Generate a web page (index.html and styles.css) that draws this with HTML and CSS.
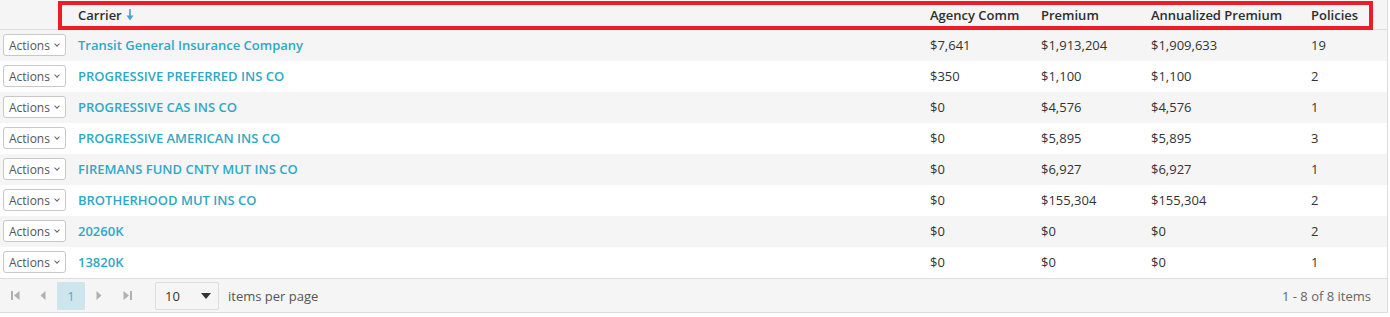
FILE: index.html
```html
<!DOCTYPE html>
<html>
<head>
<meta charset="utf-8">
<link rel="stylesheet" href="styles.css">
</head>
<body>
<div class="grid">
  <div class="row head">
    <div class="c act"></div>
    <div class="c carrier">Carrier <svg class="sort" width="8" height="12" viewBox="0 0 8 12"><rect x="3.2" y="0" width="1.6" height="8" fill="#4aa3c8"/><path d="M0.5 6.5h7L4 11.5z" fill="#4aa3c8"/></svg></div>
    <div class="c comm">Agency Comm</div>
    <div class="c prem">Premium</div>
    <div class="c ann">Annualized Premium</div>
    <div class="c pol">Policies</div>
  </div>
  <div class="row alt">
    <div class="c act"><span class="btn">Actions <i class="chev"></i></span></div>
    <div class="c carrier"><a>Transit General Insurance Company</a></div>
    <div class="c comm">$7,641</div><div class="c prem">$1,913,204</div><div class="c ann">$1,909,633</div><div class="c pol">19</div>
  </div>
  <div class="row">
    <div class="c act"><span class="btn">Actions <i class="chev"></i></span></div>
    <div class="c carrier"><a>PROGRESSIVE PREFERRED INS CO</a></div>
    <div class="c comm">$350</div><div class="c prem">$1,100</div><div class="c ann">$1,100</div><div class="c pol">2</div>
  </div>
  <div class="row alt">
    <div class="c act"><span class="btn">Actions <i class="chev"></i></span></div>
    <div class="c carrier"><a>PROGRESSIVE CAS INS CO</a></div>
    <div class="c comm">$0</div><div class="c prem">$4,576</div><div class="c ann">$4,576</div><div class="c pol">1</div>
  </div>
  <div class="row">
    <div class="c act"><span class="btn">Actions <i class="chev"></i></span></div>
    <div class="c carrier"><a>PROGRESSIVE AMERICAN INS CO</a></div>
    <div class="c comm">$0</div><div class="c prem">$5,895</div><div class="c ann">$5,895</div><div class="c pol">3</div>
  </div>
  <div class="row alt">
    <div class="c act"><span class="btn">Actions <i class="chev"></i></span></div>
    <div class="c carrier"><a>FIREMANS FUND CNTY MUT INS CO</a></div>
    <div class="c comm">$0</div><div class="c prem">$6,927</div><div class="c ann">$6,927</div><div class="c pol">1</div>
  </div>
  <div class="row">
    <div class="c act"><span class="btn">Actions <i class="chev"></i></span></div>
    <div class="c carrier"><a>BROTHERHOOD MUT INS CO</a></div>
    <div class="c comm">$0</div><div class="c prem">$155,304</div><div class="c ann">$155,304</div><div class="c pol">2</div>
  </div>
  <div class="row alt">
    <div class="c act"><span class="btn">Actions <i class="chev"></i></span></div>
    <div class="c carrier"><a>20260K</a></div>
    <div class="c comm">$0</div><div class="c prem">$0</div><div class="c ann">$0</div><div class="c pol">2</div>
  </div>
  <div class="row">
    <div class="c act"><span class="btn">Actions <i class="chev"></i></span></div>
    <div class="c carrier"><a>13820K</a></div>
    <div class="c comm">$0</div><div class="c prem">$0</div><div class="c ann">$0</div><div class="c pol">1</div>
  </div>
  <div class="pager">
    <span class="pbtn"><svg width="9" height="9" viewBox="0 0 9 9"><rect x="0" y="0" width="2" height="9" fill="#b0b0b0"/><path d="M8.5 0v9L3 4.5z" fill="#b0b0b0"/></svg></span>
    <span class="pbtn"><svg width="6" height="9" viewBox="0 0 6 9"><path d="M5.5 0v9L0.5 4.5z" fill="#b0b0b0"/></svg></span>
    <span class="page">1</span>
    <span class="pbtn"><svg width="6" height="9" viewBox="0 0 6 9"><path d="M0.5 0v9L5.5 4.5z" fill="#b0b0b0"/></svg></span>
    <span class="pbtn"><svg width="9" height="9" viewBox="0 0 9 9"><path d="M0.5 0v9L6 4.5z" fill="#b0b0b0"/><rect x="7" y="0" width="2" height="9" fill="#b0b0b0"/></svg></span>
    <span class="size">10 <svg width="10" height="8" viewBox="0 0 10 8"><path d="M0 1h10L5 7z" fill="#333"/></svg></span>
    <span class="ipp">items per page</span>
    <span class="info">1 - 8 of 8 items</span>
  </div>
  <div class="mark"></div>
</div>
</body>
</html>
```
FILE: styles.css
```css
* { box-sizing: border-box; }
body {
  margin: 0;
  background: #fff;
  font-family: "Open Sans", "Liberation Sans", sans-serif;
  font-size: 13px;
  color: #333;
}
.grid {
  position: relative;
  width: 1388px;
  border-right: 1px solid #ddd;
  border-bottom: 1px solid #ddd;
}
.row {
  display: flex;
  align-items: center;
  height: 31px;
  padding-bottom: 1px;
  background: #fff;
}
.row.alt { background: #f5f5f5; }
.row.head {
  height: 30px;
  padding-bottom: 0;
  background: #f5f5f5;
  border-bottom: 1px solid #ddd;
  font-weight: 600;
  color: #2e2e2e;
}
.c { white-space: nowrap; }
.act { width: 78px; padding-left: 3px; }
.carrier { width: 852px; display: flex; align-items: center; }
.comm { width: 111px; }
.prem { width: 110px; }
.ann { width: 160px; }
.pol { flex: 1; }
.sort { margin-left: 4px; margin-top: 1px; }
a {
  color: #2fa8c6;
  font-weight: 600;
}
.btn {
  display: inline-flex;
  align-items: center;
  height: 22px;
  width: 63px;
  padding-left: 5px;
  border: 1px solid #c8c8c8;
  border-radius: 3px;
  background: #fff;
  color: #555;
  font-size: 12px;
}
.chev {
  display: inline-block;
  width: 4px;
  height: 4px;
  border-right: 1px solid #666;
  border-bottom: 1px solid #666;
  transform: rotate(45deg);
  margin-left: 5px;
  margin-top: -3px;
}
.pager {
  display: flex;
  align-items: center;
  height: 34px;
  background: #f5f5f5;
  border-top: 1px solid #ddd;
  padding-left: 1px;
  color: #555;
}
.pbtn {
  display: inline-flex;
  align-items: center;
  justify-content: center;
  width: 28px;
  height: 28px;
}
.page {
  display: inline-flex;
  align-items: center;
  justify-content: center;
  width: 28px;
  height: 28px;
  background: #cde6ed;
  color: #5aa9c4;
}
.size {
  display: inline-flex;
  align-items: center;
  justify-content: space-between;
  width: 64px;
  height: 28px;
  margin-left: 14px;
  padding: 0 7px 0 9px;
  border: 1px solid #ddd;
  border-radius: 2px;
  color: #333;
  font-size: 13px;
}
.ipp { margin-left: 9px; font-size: 13px; color: #555; }
.info { margin-left: auto; padding-right: 16px; font-size: 13px; color: #666; }
.mark {
  position: absolute;
  left: 58px;
  top: 1px;
  width: 1315px;
  height: 29px;
  border: 4px solid #ee1c25;
}
```
